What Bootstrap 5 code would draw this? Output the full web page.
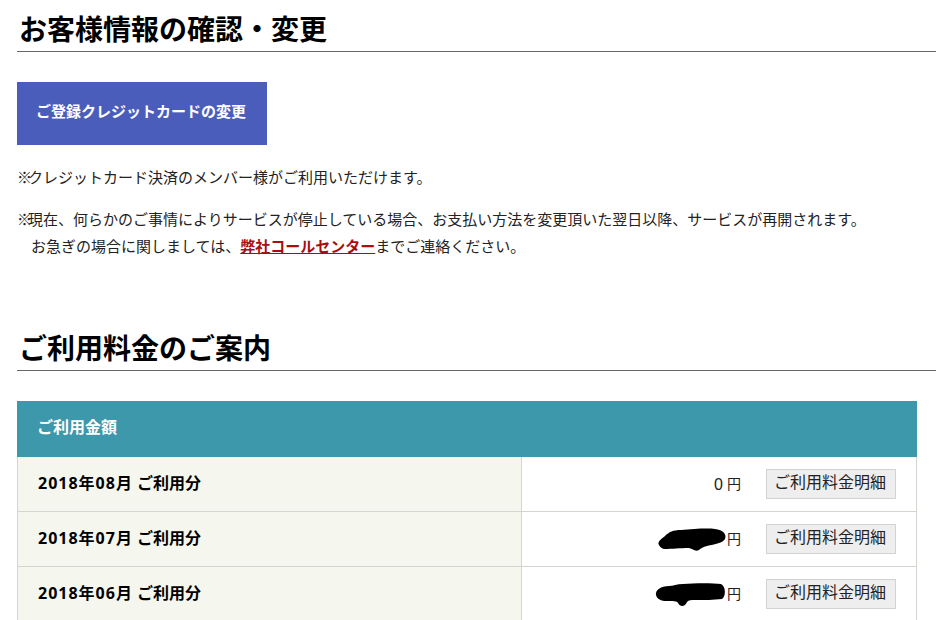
<!DOCTYPE html>
<html lang="ja">
<head>
  <meta charset="UTF-8">
  <title>お客様情報の確認・変更</title>
  <link href="https://cdn.jsdelivr.net/npm/bootstrap@5.3.0/dist/css/bootstrap.min.css" rel="stylesheet">
  <script src="https://cdn.jsdelivr.net/npm/bootstrap@5.3.0/dist/js/bootstrap.bundle.min.js"></script>
  <style>
    html, body { overflow: hidden; height: 620px; }
    body {
      font-family: "Liberation Sans", "Noto Sans CJK JP", sans-serif;
      font-size: 15px;
      line-height: 27px;
      color: #222;
      background: #fff;
    }
    .page { padding-left: 17px; }
    .page-title {
      font-size: 28px;
      font-weight: 700;
      line-height: 36px;
      color: #000;
      margin: 0;
      padding: 13px 0 2px 2px;
      border-bottom: 1px solid #666;
    }
    .title-2 { padding-top: 2px; margin-top: 70px; }
    .btn-card {
      width: 250px;
      height: 63px;
      margin-top: 30px;
      padding: 0 2px 2px 0;
      border: 0;
      border-radius: 0;
      background: #4b5dbb;
      color: #fff;
      font-size: 15px;
      font-weight: 700;
      display: flex;
      align-items: center;
      justify-content: center;
    }
    .note { margin: 19px 0 0; }
    .note + .note { margin-top: 15px; }
    .note-mark { letter-spacing: -4px; }
    .note-indent { padding-left: 14px; display: block; }
    .note a { color: #a80d12; font-weight: 700; }
    .fee-table { width: 900px; margin-top: 30px; border-collapse: collapse; table-layout: fixed; }
    .col-month { width: 504px; }
    .fee-table th, .fee-table td { border: 1px solid #d5d5d0; padding: 0 20px; height: 55px; }
    .fee-table thead th {
      height: 55px;
      padding: 0 20px 3px 19px;
      background: #3d98ac;
      border-color: #3d98ac;
      color: #fff;
      font-size: 16px;
      font-weight: 700;
    }
    .fee-table tbody th {
      padding-bottom: 2px;
      background: #f5f6ee;
      color: #000;
      font-family: "Open Sans", "Noto Sans CJK JP", sans-serif;
      font-size: 16px;
      font-weight: 700;
    }
    .month { letter-spacing: 1px; }
    .btn-detail {
      width: 130px;
      height: 30px;
      padding: 0 2px 2px 0;
      border: 1px solid #d3d3d3;
      border-radius: 0;
      background: #eee;
      color: #222;
      font-size: 16px;
      line-height: 26px;
    }
    .amount-zero { font-size: 16px; }
    .yen { font-size: 14px; margin-right: 25px; }
    .blob { display: block; margin-top: 2px; }
  </style>
</head>
<body>
<div class="page">
  <h2 class="page-title">お客様情報の確認・変更</h2>
  <button type="button" class="btn btn-card">ご登録クレジットカードの変更</button>
  <p class="note"><span class="note-mark">※</span>クレジットカード決済のメンバー様がご利用いただけます。</p>
  <p class="note"><span class="note-mark">※</span>現在、何らかのご事情によりサービスが停止している場合、お支払い方法を変更頂いた翌日以降、サービスが再開されます。<span class="note-indent">お急ぎの場合に関しましては、<a href="#">弊社コールセンター</a>までご連絡ください。</span></p>

  <h2 class="page-title title-2">ご利用料金のご案内</h2>
  <table class="fee-table">
    <colgroup><col class="col-month"><col></colgroup>
    <thead>
      <tr><th colspan="2">ご利用金額</th></tr>
    </thead>
    <tbody>
      <tr>
        <th><span class="month">2018年08月</span> ご利用分</th>
        <td>
          <div class="d-flex justify-content-end align-items-center">
            <span class="amount-zero me-1">0</span><span class="yen">円</span>
            <button type="button" class="btn btn-detail">ご利用料金明細</button>
          </div>
        </td>
      </tr>
      <tr>
        <th><span class="month">2018年07月</span> ご利用分</th>
        <td>
          <div class="d-flex justify-content-end align-items-center">
            <svg class="blob" width="70" height="24" viewBox="0 0 70 24"><path d="M2 17C0 14 4 11 8 8C12 4 16 2 24 2C36 1 50 0 58 1C66 2 70 6 68 11C66 15 58 16 50 18C46 19 44 20 42 22C38 24 36 21 32 20C24 20 14 21 8 21C5 21 3 19 2 17Z" fill="#000"/></svg>
            <span class="yen">円</span>
            <button type="button" class="btn btn-detail">ご利用料金明細</button>
          </div>
        </td>
      </tr>
      <tr>
        <th><span class="month">2018年06月</span> ご利用分</th>
        <td>
          <div class="d-flex justify-content-end align-items-center">
            <svg class="blob" width="72" height="24" viewBox="0 0 72 24"><path d="M1 12C0 7 6 3 14 3C18 3 22 1 28 1C40 0 58 0 66 1C71 3 71 14 67 16C58 17 50 17 40 17C36 17 34 17 32 19C30 24 25 24 23 20C22 18 18 18 12 18C6 18 2 16 1 12Z" fill="#000"/></svg>
            <span class="yen">円</span>
            <button type="button" class="btn btn-detail">ご利用料金明細</button>
          </div>
        </td>
      </tr>
    </tbody>
  </table>
</div>
</body>
</html>
